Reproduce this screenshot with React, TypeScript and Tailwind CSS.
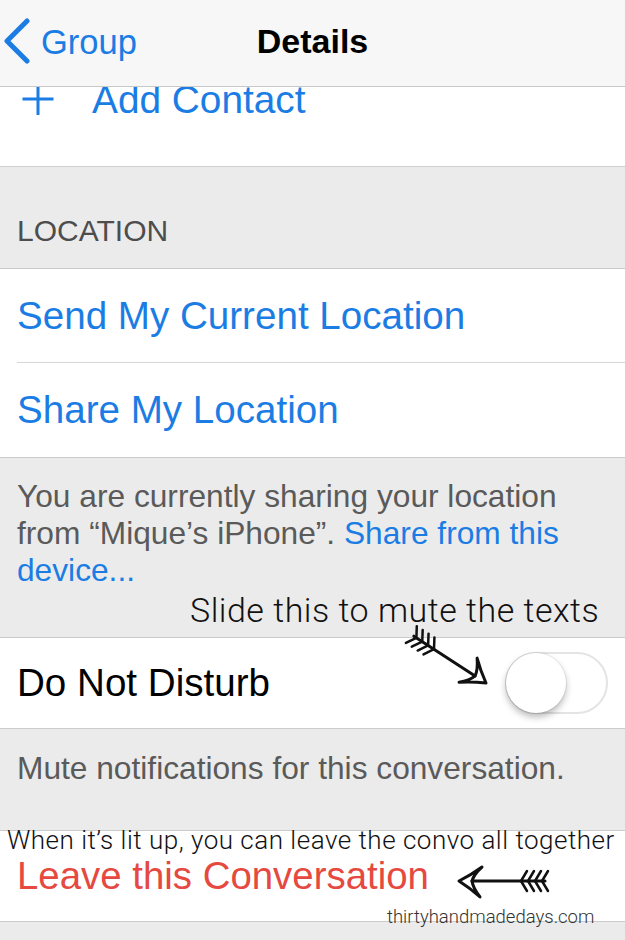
import React from "react";

const BLUE = "#1b7de4";

function Arrow({ x, y, rot }: { x: number; y: number; rot: number }) {
  return (
    <g transform={`translate(${x} ${y}) rotate(${rot})`} fill="none" stroke="#111" strokeWidth={3} strokeLinecap="round" strokeLinejoin="round">
      <path d="M23 -14 Q12 -6 0 0 Q11 7 21 16 Q14 7 13 0 Q15 -7 23 -14 Z" />
      <path d="M13 0 L86 0" />
      <path d="M68 -10 L62 0 L68 10" strokeWidth={2.5} />
      <path d="M75 -10 L69 0 L75 10" strokeWidth={2.5} />
      <path d="M82 -10 L76 0 L82 10" strokeWidth={2.5} />
      <path d="M89 -10 L83 0 L89 10" strokeWidth={2.5} />
    </g>
  );
}

export default function App() {
  return (
    <div className="relative w-[625px] h-[940px] overflow-hidden bg-[#ebebeb] font-['Liberation_Sans',Arial,sans-serif]">
      {/* Nav bar */}
      <div className="relative z-10 h-[87px] bg-[#f7f7f7] border-b border-[#c8c8c8] grid grid-cols-[1fr_auto_1fr] items-center">
        <div className="flex items-center">
          <svg width="30" height="46" viewBox="0 0 30 46" className="ml-[2px] mt-[-4px]">
            <polyline points="25,3 5,23 25,43" fill="none" stroke={BLUE} strokeWidth="5" strokeLinecap="round" strokeLinejoin="round" />
          </svg>
          <span className="ml-[9px] text-[34.5px] leading-[34px] mt-[-3px]" style={{ color: BLUE }}>Group</span>
        </div>
        <span className="text-[34px] leading-[34px] font-bold text-black mt-[-4px]">Details</span>
        <div />
      </div>

      {/* Add Contact row */}
      <div className="h-[80px] bg-white border-b border-[#cfcfcf] flex items-start pl-[22px]">
        <svg width="32" height="32" viewBox="0 0 32 32" className="block mt-[-4px]">
          <path d="M0.5 16 L31.5 16 M16 0 L16 32" stroke={BLUE} strokeWidth="3" />
        </svg>
        <span className="ml-[38px] mt-[-6px] text-[38.8px] leading-[38px]" style={{ color: BLUE }}>Add Contact</span>
      </div>

      {/* LOCATION header */}
      <div className="h-[101px] flex items-end pl-[17px] pb-[22px]">
        <span className="text-[30px] leading-[30px] text-[#4d4d4d]">LOCATION</span>
      </div>

      {/* Location rows */}
      <div className="bg-white border-y border-[#cbcbcb]">
        <div className="h-[93px] flex items-center pl-[17px]">
          <span className="text-[38.6px] leading-[38px]" style={{ color: BLUE }}>Send My Current Location</span>
        </div>
        <div className="ml-[17px] h-px bg-[#d6d6d6]" />
        <div className="h-[94px] flex items-center pl-[17px]">
          <span className="text-[38.6px] leading-[38px]" style={{ color: BLUE }}>Share My Location</span>
        </div>
      </div>

      {/* Location footer */}
      <div className="h-[179px] pl-[17px] pr-[40px] pt-[20px]">
        <p className="text-[31.7px] leading-[37px] text-[#5a5a5a]">
          You are currently sharing your location from “Mique’s iPhone”. <span style={{ color: BLUE }}>Share from this device...</span>
        </p>
      </div>

      {/* Do Not Disturb */}
      <div className="bg-white border-y border-[#cbcbcb]">
        <div className="h-[90px] flex items-center justify-between pl-[17px] pr-[17px]">
          <span className="text-[38.6px] leading-[38px] text-black">Do Not Disturb</span>
          <div className="relative w-[103px] h-[62px] rounded-full border-2 border-[#e4e4e4] bg-white">
            <div className="absolute left-[-1px] top-[-1px] w-[60px] h-[60px] rounded-full bg-white shadow-[0_4px_7px_rgba(0,0,0,0.28),0_0_0_1px_rgba(0,0,0,0.06)]" />
          </div>
        </div>
      </div>

      {/* Mute footer */}
      <div className="h-[101px] pl-[17px] pt-[21px]">
        <p className="text-[31.7px] leading-[37px] text-[#5a5a5a] whitespace-nowrap">Mute notifications for this conversation.</p>
      </div>

      {/* Leave */}
      <div className="bg-white border-y border-[#cbcbcb]">
        <div className="h-[90px] flex items-center pl-[17px]">
          <span className="text-[38.4px] leading-[38px] text-[#e5493f]">Leave this Conversation</span>
        </div>
      </div>

      {/* Annotations */}
      <div className="absolute left-[190px] top-[593px] text-[34px] leading-[34px] tracking-[0.5px] font-light text-[#111] font-['Roboto',sans-serif] whitespace-nowrap">
        Slide this to mute the texts
      </div>
      <div className="absolute left-[7px] top-[827px] text-[26px] leading-[26px] tracking-[0.5px] font-light text-[#111] font-['Roboto',sans-serif] whitespace-nowrap">
        When it’s lit up, you can leave the convo all together
      </div>
      <div className="absolute left-[387px] top-[908px] text-[18.5px] leading-[18px] font-light text-[#333] font-['Roboto',sans-serif] whitespace-nowrap">
        thirtyhandmadedays.com
      </div>

      <svg className="absolute left-0 top-0 pointer-events-none" width="625" height="940" viewBox="0 0 625 940">
        <Arrow x={486} y={683} rot={213} />
        <Arrow x={459} y={881} rot={0} />
      </svg>
    </div>
  );
}
